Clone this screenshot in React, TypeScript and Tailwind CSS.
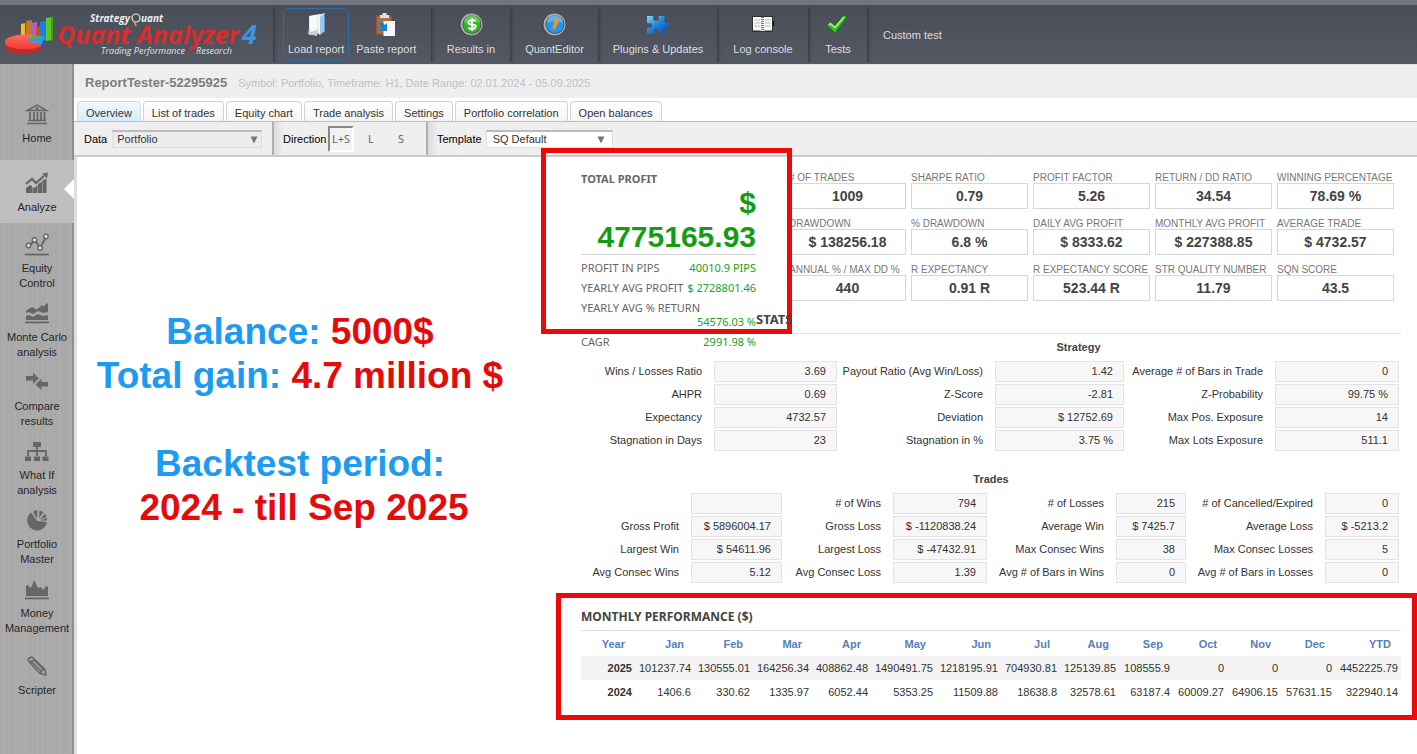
import { useState } from "react";
import type { ReactNode } from "react";

const TABS = [
  "Overview",
  "List of trades",
  "Equity chart",
  "Trade analysis",
  "Settings",
  "Portfolio correlation",
  "Open balances",
];

const METRICS = [
  ["# OF TRADES", "1009"],
  ["SHARPE RATIO", "0.79"],
  ["PROFIT FACTOR", "5.26"],
  ["RETURN / DD RATIO", "34.54"],
  ["WINNING PERCENTAGE", "78.69 %"],
  ["DRAWDOWN", "$ 138256.18"],
  ["% DRAWDOWN", "6.8 %"],
  ["DAILY AVG PROFIT", "$ 8333.62"],
  ["MONTHLY AVG PROFIT", "$ 227388.85"],
  ["AVERAGE TRADE", "$ 4732.57"],
  ["ANNUAL % / MAX DD %", "440"],
  ["R EXPECTANCY", "0.91 R"],
  ["R EXPECTANCY SCORE", "523.44 R"],
  ["STR QUALITY NUMBER", "11.79"],
  ["SQN SCORE", "43.5"],
];

const STRATEGY = [
  ["Wins / Losses Ratio", "3.69", "Payout Ratio (Avg Win/Loss)", "1.42", "Average # of Bars in Trade", "0"],
  ["AHPR", "0.69", "Z-Score", "-2.81", "Z-Probability", "99.75 %"],
  ["Expectancy", "4732.57", "Deviation", "$ 12752.69", "Max Pos. Exposure", "14"],
  ["Stagnation in Days", "23", "Stagnation in %", "3.75 %", "Max Lots Exposure", "511.1"],
];

const TRADES = [
  ["", "", "# of Wins", "794", "# of Losses", "215", "# of Cancelled/Expired", "0"],
  ["Gross Profit", "$ 5896004.17", "Gross Loss", "$ -1120838.24", "Average Win", "$ 7425.7", "Average Loss", "$ -5213.2"],
  ["Largest Win", "$ 54611.96", "Largest Loss", "$ -47432.91", "Max Consec Wins", "38", "Max Consec Losses", "5"],
  ["Avg Consec Wins", "5.12", "Avg Consec Loss", "1.39", "Avg # of Bars in Wins", "0", "Avg # of Bars in Losses", "0"],
];

const MONTHS = ["Year", "Jan", "Feb", "Mar", "Apr", "May", "Jun", "Jul", "Aug", "Sep", "Oct", "Nov", "Dec", "YTD"];
const MONTH_COLS = [54, 59, 59, 59, 59, 65, 65, 59, 59, 54, 54, 54, 54, 66];
const MONTHLY = [
  ["2025", "101237.74", "130555.01", "164256.34", "408862.48", "1490491.75", "1218195.91", "704930.81", "125139.85", "108555.9", "0", "0", "0", "4452225.79"],
  ["2024", "1406.6", "330.62", "1335.97", "6052.44", "5353.25", "11509.88", "18638.8", "32578.61", "63187.4", "60009.27", "64906.15", "57631.15", "322940.14"],
];

export default function App() {
  return (
    <div className="flex min-h-screen flex-col bg-white font-['Liberation_Sans',Arial,sans-serif] text-[11px] leading-[14px] text-[#333]">
      <TopBar />
      <div className="flex flex-1">
        <Sidebar />
        <main className="min-w-0 flex-1">
          <div className="flex h-[34px] items-center gap-[11px] border-t border-[#e2e2e2] bg-[#efefef] px-[11px] pt-[3px]">
            <h1 className="text-[13px] font-bold text-[#7d7d7d]">ReportTester-52295925</h1>
            <span className="text-[#bfbfbf]">
              Symbol: Portfolio, Timeframe: H1, Date Range: 02.01.2024 - 05.09.2025
            </span>
          </div>
          <Tabs />
          <Toolbar />
          <Report />
        </main>
      </div>
    </div>
  );
}

function TopBar() {
  return (
    <header className="flex h-16 border-t-[5px] border-[#72757e] bg-linear-to-b from-[#484d57] to-[#535862] text-[#dcdfe3]">
      <div className="w-[273px] shrink-0">
        <Logo />
      </div>
      <ToolGroup className="w-[158px] gap-[2px] pl-[9px]">
        <ToolButton label="Load report" active>
          <FolderIcon />
        </ToolButton>
        <ToolButton label="Paste report">
          <PasteIcon />
        </ToolButton>
      </ToolGroup>
      <ToolGroup className="w-[79px] justify-center">
        <ToolButton label="Results in">
          <CoinIcon kind="dollar" />
        </ToolButton>
      </ToolGroup>
      <ToolGroup className="w-[88px] justify-center">
        <ToolButton label="QuantEditor">
          <CoinIcon kind="editor" />
        </ToolButton>
      </ToolGroup>
      <ToolGroup className="w-[119px] justify-center">
        <ToolButton label="Plugins & Updates">
          <PuzzleIcon />
        </ToolButton>
      </ToolGroup>
      <ToolGroup className="w-[91px] justify-center">
        <ToolButton label="Log console">
          <NotebookIcon />
        </ToolButton>
      </ToolGroup>
      <ToolGroup className="w-[59px] justify-center">
        <ToolButton label="Tests">
          <CheckIcon />
        </ToolButton>
      </ToolGroup>
      <ToolGroup className="pl-[15px]">
        <button type="button">Custom test</button>
      </ToolGroup>
    </header>
  );
}

function ToolGroup({ className, children }: { className: string; children: ReactNode }) {
  return (
    <div className={`my-[2px] flex shrink-0 items-center border-l border-[#3a3e46] shadow-[inset_3px_0_3px_-2px_#3d424a] ${className}`}>
      {children}
    </div>
  );
}

function ToolButton({ label, active, children }: { label: string; active?: boolean; children: ReactNode }) {
  return (
    <button
      type="button"
      className={`flex h-[53px] flex-col items-center gap-[5px] rounded-[5px] border px-1 pt-[2px] whitespace-nowrap ${
        active ? "border-[#2f6da6]" : "border-transparent"
      }`}
    >
      {children}
      <span>{label}</span>
    </button>
  );
}

function Sidebar() {
  return (
    <nav className="flex w-[74px] shrink-0 flex-col border-r-2 border-[#8f8f8f] bg-[#a9a9a9] bg-[repeating-linear-gradient(90deg,#a6a6a6_0px,#adadad_4px,#a8a8a8_7px,#acacac_11px)] text-[#262626]">
      <SideItem label={["Home"]} className="h-24 pt-[38px]">
        <g fill="none" stroke="#666" strokeWidth="1.5">
          <path d="M2.5 8.5 12 3l9.500 5.500z" />
          <path d="M5 10v8M9 10v8M12.500 10v8M16 10v8M19.500 10v8" strokeWidth="1.800" />
          <path d="M3 18.500h18M2 21.500h20" />
          <circle cx="12" cy="6.500" r=".8" />
        </g>
      </SideItem>
      <SideItem label={["Analyze"]} className="h-[63px] pt-[11px]" active>
        <g fill="#666">
          <path d="M1 22v-5l4-3 2 1v7zM7.500 22v-6l2 1 3-3v8zM13 22v-9l4-2.500V22zM17.500 22V9.500l4-2V22z" />
          <path d="m1 13 6-5 4 4 8-7" fill="none" stroke="#666" strokeWidth="2.200" />
          <path d="m17 2.500 6-1-1 6z" />
        </g>
      </SideItem>
      <SideItem label={["Equity", "Control"]} className="h-[69px] pt-[9px]">
        <g fill="none" stroke="#666" strokeWidth="1.800">
          <path d="m4 14 6-6 5 8 6-11" />
          <g fill="#eee" strokeWidth="1.500">
            <circle cx="3.500" cy="13.500" r="2.200" />
            <circle cx="9.500" cy="8" r="2.200" />
            <circle cx="15" cy="16" r="2.200" />
            <circle cx="21" cy="4.500" r="2.200" />
          </g>
          <path d="M0 22.500h24" />
        </g>
      </SideItem>
      <SideItem label={["Monte Carlo", "analysis"]} className="h-[69px] pt-[9px]">
        <g fill="#666">
          <path d="M1 12v-2.500l6-3.500 5 2.500 5-4.500 1 1.500L23 2v9l-5 1-5-2-5 3-4-2z" />
          <path d="M1 19v-4l3-1 4 2 5-3 5 2 5-1v5z" />
          <path d="M0 20.500h24v1.800H0z" />
        </g>
      </SideItem>
      <SideItem label={["Compare", "results"]} className="h-[69px] pt-[9px]">
        <g fill="#666">
          <path d="M1 6h7V2.500L14 8.500 8 14v-3.500H1z" />
          <path d="M23 12h-6.500V8.500l-6 6 6 5.500v-3.500H23z" />
        </g>
      </SideItem>
      <SideItem label={["What If", "analysis"]} className="h-[69px] pt-[9px]">
        <g fill="#666">
          <path d="M8 3h8v5H8zM0 17.500h6V22H0zM9 17.500h6V22H9zM17.500 17.500h6V22h-6z" />
          <path d="M12 8v9M3 17v-5h18v5" fill="none" stroke="#666" strokeWidth="1.800" />
        </g>
      </SideItem>
      <SideItem label={["Portfolio", "Master"]} className="h-[69px] pt-[9px]">
        <g fill="#666">
          <path d="M12 13 6 4.500A10 10 0 1 0 22 14z" />
          <path d="m12 11-4-7.500q2-1.300 4.500-1.300z M14 10l.500-7.500 4 1.500z M15 11.500l5-6 1.500 3.500z M15.500 12.500 22 10v2.500z" />
        </g>
      </SideItem>
      <SideItem label={["Money", "Management"]} className="h-[69px] pt-[9px]">
        <g fill="#666">
          <path d="M1 19V9l2-1 2 3 2-2 2-6 4 8 3-1 2 3 3-4 2 1v9z" />
          <path d="M0 20.500h24v1.800H0z" />
        </g>
      </SideItem>
      <SideItem label={["Scripter"]} className="h-[116px] pt-[17px]">
        <g fill="none" stroke="#666" strokeWidth="1.500" strokeLinejoin="round">
          <path d="M3 6.500Q3.500 3.500 7 3L20 15.500l1 5.500-6-1.500z" />
          <path d="m6 9 3.500-4M5.500 6.500 17 18M8.500 5.500 19 16" />
          <path d="M15 19.500q.500-3.500 5-4" />
        </g>
      </SideItem>
    </nav>
  );
}

function SideItem({
  label,
  className,
  active,
  children,
}: {
  label: string[];
  className: string;
  active?: boolean;
  children: ReactNode;
}) {
  return (
    <a
      href="#"
      className={`relative flex w-[74px] shrink-0 flex-col items-center leading-[15px] ${className} ${active ? "bg-[#bfbfbf]" : ""}`}
    >
      <svg viewBox="0 0 24 24" className="size-6">
        {children}
      </svg>
      <span className="mt-[5px] text-center">
        {label.map((line) => (
          <span key={line} className="block">
            {line}
          </span>
        ))}
      </span>
      {active && (
        <svg viewBox="0 0 10 20" className="absolute top-[19px] right-0 h-5 w-[10px]">
          <path d="M10 0v20L0 10z" fill="#fff" />
        </svg>
      )}
    </a>
  );
}

function Tabs() {
  const [tab, setTab] = useState(TABS[0]);
  return (
    <div role="tablist" className="flex h-6 items-end gap-[2px] border-b border-[#bdbdbd] pl-[3px]">
      {TABS.map((t) => (
        <button
          key={t}
          type="button"
          role="tab"
          aria-selected={t === tab}
          onClick={() => setTab(t)}
          className={`h-5 rounded-t-[4px] border border-b-0 px-2 pt-[2px] ${
            t === tab
              ? "border-[#cfdde4] bg-linear-to-b from-[#f1f9fd] to-[#d3edfa]"
              : "border-[#d3d3d3] bg-linear-to-b from-white to-[#f5f5f5]"
          }`}
        >
          {t}
        </button>
      ))}
    </div>
  );
}

function Toolbar() {
  const [dir, setDir] = useState("L+S");
  return (
    <div className="flex h-[35px] items-stretch border-b-2 border-[#cbcbcb] bg-[#efefef] text-black">
      <div className="flex w-[198px] items-center gap-[5px] pl-[10px]">
        <label htmlFor="data">Data</label>
        <Select id="data" value="Portfolio" className="w-[150px] bg-[#ececec] pl-1" arrow="right-1" />
      </div>
      <div className="flex w-[154px] items-center border-l-2 border-[#b0b0b0] bg-linear-to-r from-[#dcdcdc] to-[#efefef] to-[10px] pl-[9px]">
        <span className="w-[45px]">Direction</span>
        {["L+S", "L", "S"].map((d) => (
          <button
            key={d}
            type="button"
            onClick={() => setDir(d)}
            className={`mr-1 h-[26px] w-[26px] border-2 font-['Noto_Sans',sans-serif] text-[#666] ${
              d === dir ? "border-t-[#888] border-l-[#888] border-r-white border-b-white bg-[#f3f3f3]" : "border-transparent"
            }`}
          >
            {d}
          </button>
        ))}
      </div>
      <div className="flex items-center gap-1 border-l-2 border-[#b0b0b0] bg-linear-to-r from-[#dcdcdc] to-[#efefef] to-[10px] pl-[9px]">
        <label htmlFor="template">Template</label>
        <Select id="template" value="SQ Default" className="w-[127px] bg-white pl-[6px]" arrow="right-2" />
      </div>
    </div>
  );
}

function Select({ id, value, className, arrow }: { id: string; value: string; className: string; arrow: string }) {
  return (
    <span className="relative">
      <select
        id={id}
        className={`block h-[18px] appearance-none border border-t-2 border-[#dedede] border-t-[#bbb] text-[#333] outline-none ${className}`}
      >
        <option>{value}</option>
      </select>
      <svg viewBox="0 0 8 8" className={`pointer-events-none absolute top-[6px] size-2 ${arrow}`}>
        <path d="M.5.5h7L4 7.500z" fill="#777" />
      </svg>
    </span>
  );
}

function Report() {
  return (
    <div className="flex border-l-[3px] border-[#dedede] pr-4 pb-[50px]">
      <div className="flex flex-1 flex-col items-center pt-[153px] pr-[58px] text-center text-[37px] leading-[44px] font-bold whitespace-nowrap text-[#1d9bf0]">
        <p>
          Balance: <span className="text-[#e60b0b]">5000$</span>
        </p>
        <p>
          Total gain: <span className="text-[#e60b0b]">4.7 million $</span>
        </p>
        <p className="mt-11">Backtest period:</p>
        <p className="pl-2 text-[#e60b0b]">2024 - till Sep 2025</p>
      </div>
      <div className="w-[820px] shrink-0">
        <div className="flex">
          <ProfitPanel />
          <div className="min-w-0 flex-1 pt-[15px]">
            <dl className="grid grid-cols-5 gap-x-[5px] gap-y-[9px] pr-[7px] pl-[33px]">
              {METRICS.map(([label, value]) => (
                <div key={label}>
                  <dt className="text-[10px] leading-[11px] whitespace-nowrap text-[#777]">{label}</dt>
                  <dd className="flex h-[26px] items-center justify-center border border-[#d3d8d8] text-[14px] font-bold text-[#444]">
                    {value}
                  </dd>
                </div>
              ))}
            </dl>
            {/* the heading runs over the callout frame's right edge */}
            <h2 className="mt-[10px] border-b border-[#dedede] pb-[6px] font-['Noto_Sans',sans-serif] text-[13px] leading-4 font-bold text-[#444]">
              <span className="relative z-20">STATS</span>
            </h2>
            <h3 className="mt-[6px] text-center font-bold text-[#444]">Strategy</h3>
          </div>
        </div>
        <StatTable rows={STRATEGY} cols={[133, 123, 158, 129, 151, 124]} className="mt-[6px]" />
        <h3 className="mt-5 text-center font-bold text-[#444]">Trades</h3>
        <StatTable rows={TRADES} cols={[110, 91, 111, 94, 129, 70, 139, 74]} className="mt-[6px]" />
        <MonthlyTable />
      </div>
    </div>
  );
}

function ProfitPanel() {
  return (
    <section className="relative w-[175px] shrink-0 pt-[15px] font-['Noto_Sans',sans-serif] text-[#666]">
      <h2 className="font-bold">TOTAL PROFIT</h2>
      <p className="border-b border-[#cfd6d6] text-right font-['Liberation_Sans',Arial,sans-serif] text-[30px] leading-[34px] font-bold text-[#149c14]">
        $ 4775165.93
      </p>
      <ProfitRow label="PROFIT IN PIPS" value="40010.9 PIPS" />
      <ProfitRow label="YEARLY AVG PROFIT" value="$ 2728801.46" />
      <ProfitRow label="YEARLY AVG % RETURN" value="54576.03 %" />
      <ProfitRow label="CAGR" value="2991.98 %" />
      {/* callout frame */}
      <div className="pointer-events-none absolute -top-[9px] -right-9 -left-10 z-10 h-[186px] border-[5px] border-[#ec0909]" />
    </section>
  );
}

function ProfitRow({ label, value }: { label: string; value: string }) {
  return (
    <div className="flex flex-wrap justify-between pt-[6px] whitespace-nowrap">
      <span>{label}</span>
      <span className="ml-auto text-[#22a022]">{value}</span>
    </div>
  );
}

function StatTable({ rows, cols, className }: { rows: string[][]; cols: number[]; className: string }) {
  return (
    <table className={`w-full table-fixed ${className}`}>
      <colgroup>
        {cols.map((w, i) => (
          <col key={i} style={{ width: w }} />
        ))}
        <col />
      </colgroup>
      <tbody>
        {rows.map((row, r) => (
          <tr key={r}>
            {row.map((cell, i) =>
              i % 2 === 0 ? (
                <th key={i} scope="row" className="p-0 pr-3 pb-[2px] text-right font-normal whitespace-nowrap">
                  {cell}
                </th>
              ) : (
                <td key={i} className="px-0 py-px">
                  <div className="h-[21px] border border-[#e3e3e3] bg-[#f7f7f7] pt-[2px] pr-[10px] text-right leading-[14px] whitespace-nowrap">
                    {cell}
                  </div>
                </td>
              )
            )}
            <td />
          </tr>
        ))}
      </tbody>
    </table>
  );
}

function MonthlyTable() {
  return (
    <section className="relative mt-[25px]">
      <h2 className="border-b border-[#dedede] pb-[5px] font-['Noto_Sans',sans-serif] text-[12px] leading-4 font-bold text-[#444]">
        MONTHLY PERFORMANCE ($)
      </h2>
      <table className="mt-px w-full table-fixed text-right">
        <colgroup>
          {MONTH_COLS.map((w, i) => (
            <col key={i} style={{ width: w }} />
          ))}
        </colgroup>
        <thead>
          <tr className="h-6 text-[#5580b5]">
            {MONTHS.map((m) => (
              <th key={m} scope="col" className="p-0 pr-[10px] font-bold">
                {m}
              </th>
            ))}
          </tr>
        </thead>
        <tbody>
          {MONTHLY.map((row) => (
            <tr key={row[0]} className="h-6 odd:bg-[#f3f3f3]">
              {row.map((cell, i) =>
                i === 0 ? (
                  <th key={i} scope="row" className="p-0 pr-[3px] font-bold">
                    {cell}
                  </th>
                ) : (
                  <td key={i} className="p-0 pr-[3px] whitespace-nowrap">
                    {cell}
                  </td>
                )
              )}
            </tr>
          ))}
        </tbody>
      </table>
      <div className="pointer-events-none absolute -top-4 -right-4 -bottom-4 -left-[25px] border-[5px] border-[#ec0909]" />
    </section>
  );
}

function Logo() {
  return (
    <svg viewBox="0 0 273 59" className="h-[59px] w-full font-['Open_Sans','Noto_Sans',sans-serif] italic">
      <defs>
        <linearGradient id="pie" x1="0" y1="0" x2="0" y2="1">
          <stop offset="0" stopColor="#ff6a60" />
          <stop offset="1" stopColor="#f23a35" />
        </linearGradient>
      </defs>
      <path d="m21 19 4-1v17h-4z" fill="#f2c21c" />
      <path d="m26 16 6-1v20h-6z" fill="#c07a35" />
      <path d="m31 18 6-1v18h-6z" fill="#a468c4" />
      <path d="m36 22 5-1v14h-5z" fill="#e0402c" />
      <path d="m40 17 6-1v19l-6 2z" fill="#1d7fe0" />
      <path d="m46 13 7-1v23l-7 1z" fill="#5cc929" />
      <path d="m51 12 2 1v22l-2 1z" fill="#3fa315" />
      <path d="M5 37v4c0 6 9 8 18 8s19-3 21-8v-6z" fill="#c22a26" />
      <ellipse cx="24.500" cy="37" rx="19.500" ry="7.500" fill="url(#pie)" />
      <path d="m26 35 18-4q2 4-2 8l-1 1z" fill="#2f9be8" />
      <path d="m26 35 8-4q6-1 9 1z" fill="#49b83a" />
      <path d="m41 40 3-6v7l-3 4z" fill="#1764b4" />
      <text x="90" y="17" fontSize="10" fontWeight="700" fill="#eceef0">Strategy</text>
      <circle cx="136" cy="13" r="4" fill="none" stroke="#eceef0" strokeWidth="1.200" />
      <path d="m134.500 17 1.500 4" stroke="#e8962a" strokeWidth="2" />
      <text x="141" y="17" fontSize="10" fontWeight="700" fill="#eceef0">uant</text>
      <text x="57" y="39" fontSize="25" fontWeight="700" fill="#dd2b2b">Quant Analyzer</text>
      <text x="242" y="39" fontSize="27" fontWeight="700" fill="#3c92e3">4</text>
      <text x="101" y="49" fontSize="9" fontWeight="400" fill="#e0e3e6">Trading Performance</text>
      <text x="196" y="49" fontSize="9" fontWeight="400" fill="#e0e3e6">Research</text>
    </svg>
  );
}

function FolderIcon() {
  return (
    <svg viewBox="0 0 26 26" className="size-[26px]">
      <path d="M6 5 17 3v19L6 24z" fill="#e9ebed" />
      <path d="m5 23 1-6 9 1-1 7z" fill="#c9cdd1" />
      <path d="m7 5 7-1v15l-7 2z" fill="#f8f9fa" />
      <path d="m17 5 5-3v18l-5 4z" fill="#9cc6ea" />
      <path d="m15 4 7-2-5 4v18l-2-2z" fill="#eef6fc" />
      <path d="M21 3v18l1-1V2z" fill="#5b9bd2" />
    </svg>
  );
}

function PasteIcon() {
  return (
    <svg viewBox="0 0 26 26" className="size-[26px]">
      <rect x="3" y="4" width="16" height="20" rx="1.500" fill="#8e5a33" />
      <rect x="4.500" y="5.500" width="13" height="17" fill="#a97046" />
      <path d="M7 7V4h2.500V2h4v2H16v3z" fill="#dfe2e5" />
      <path d="M10.500 10H22v15H10.500z" fill="#f6f7f8" />
      <path d="m6 12.500 2.500-2 3.500 3.500 2-2v8H6l2.500-2.500z" fill="#1b7fd4" />
    </svg>
  );
}

function CoinIcon({ kind }: { kind: "dollar" | "editor" }) {
  const green = kind === "dollar";
  return (
    <svg viewBox="0 0 26 26" className="size-[26px]">
      <circle cx="12" cy="14" r="11" fill="#444" />
      <circle cx="13.500" cy="13.500" r="11" fill="#a9adb0" />
      <circle cx="14" cy="13.500" r="9.500" fill="#55595c" />
      <circle cx="14" cy="13.500" r="8.500" fill={green ? "#2eb82a" : "#2196f3"} />
      <path d="M6 12a8 8 0 0 1 16 0q-8-4-16 0" fill={green ? "#7fe067" : "#7cc8fa"} opacity=".6" />
      {green ? (
        <path
          d="M17.500 10.500q-1-1.500-3.500-1.500t-3.500 2 3.500 2.500 3.500 2.500-3.500 2-3.500-1.500M14 7v13"
          fill="none"
          stroke="#fff"
          strokeWidth="2"
        />
      ) : (
        <path d="m14 8 5-1-4 10-3 2-.500-3z" fill="#ef9420" />
      )}
    </svg>
  );
}

function PuzzleIcon() {
  return (
    <svg viewBox="0 0 26 26" className="size-[26px]">
      <defs>
        <linearGradient id="puzzle" x1="0" y1="0" x2="1" y2="1">
          <stop offset="0" stopColor="#7fd8fb" />
          <stop offset=".45" stopColor="#1f86d8" />
          <stop offset="1" stopColor="#0b3fa8" />
        </linearGradient>
      </defs>
      <path
        d="M2 5h6q1 1 0 2.500 1 3 3.500 2.500 3-.500 2-3.500-.500-1 .500-1.500h5.500v6.500q1 1 2.500 0 3-.500 3 2.500t-3 2.500q-2-1-2.500 0V23H14q-1-1 0-2 .500-3-2.500-3T9 21q1 1 0 2H2v-6q1-1 2.500 0 2.500 0 2.500-2.500T4.500 12Q3 13 2 11.500z"
        fill="url(#puzzle)"
      />
    </svg>
  );
}

function NotebookIcon() {
  return (
    <svg viewBox="0 0 26 26" className="size-[26px]">
      <path d="M2 5h21v16H2z" fill="#2c2f34" />
      <path d="M3 6h9v13.500H3zM13.500 6H22v13.500h-8.500z" fill="#f7f7f5" />
      <path d="M4.500 9h6M4.500 12h6M4.500 15h6M15 9h5.500M15 12h5.500M15 15h5.500" stroke="#bbb" />
      <path d="M12.500 6v14" stroke="#f7f7f5" strokeWidth="4" />
      <path d="M12.500 6v14" stroke="#777" strokeWidth="3" strokeDasharray="1 1" />
      <path d="M23 10h1v5h-1z" fill="#111" />
    </svg>
  );
}

function CheckIcon() {
  return (
    <svg viewBox="0 0 26 26" className="size-[26px]">
      <path d="m2 14 3-3 4.500 4L19 4l3 2-12 16z" fill="#35c22b" stroke="#14780f" />
      <path d="m4 14 1.500-1.500 4.500 4L19 6" fill="none" stroke="#a4f590" strokeWidth="1.500" />
    </svg>
  );
}
